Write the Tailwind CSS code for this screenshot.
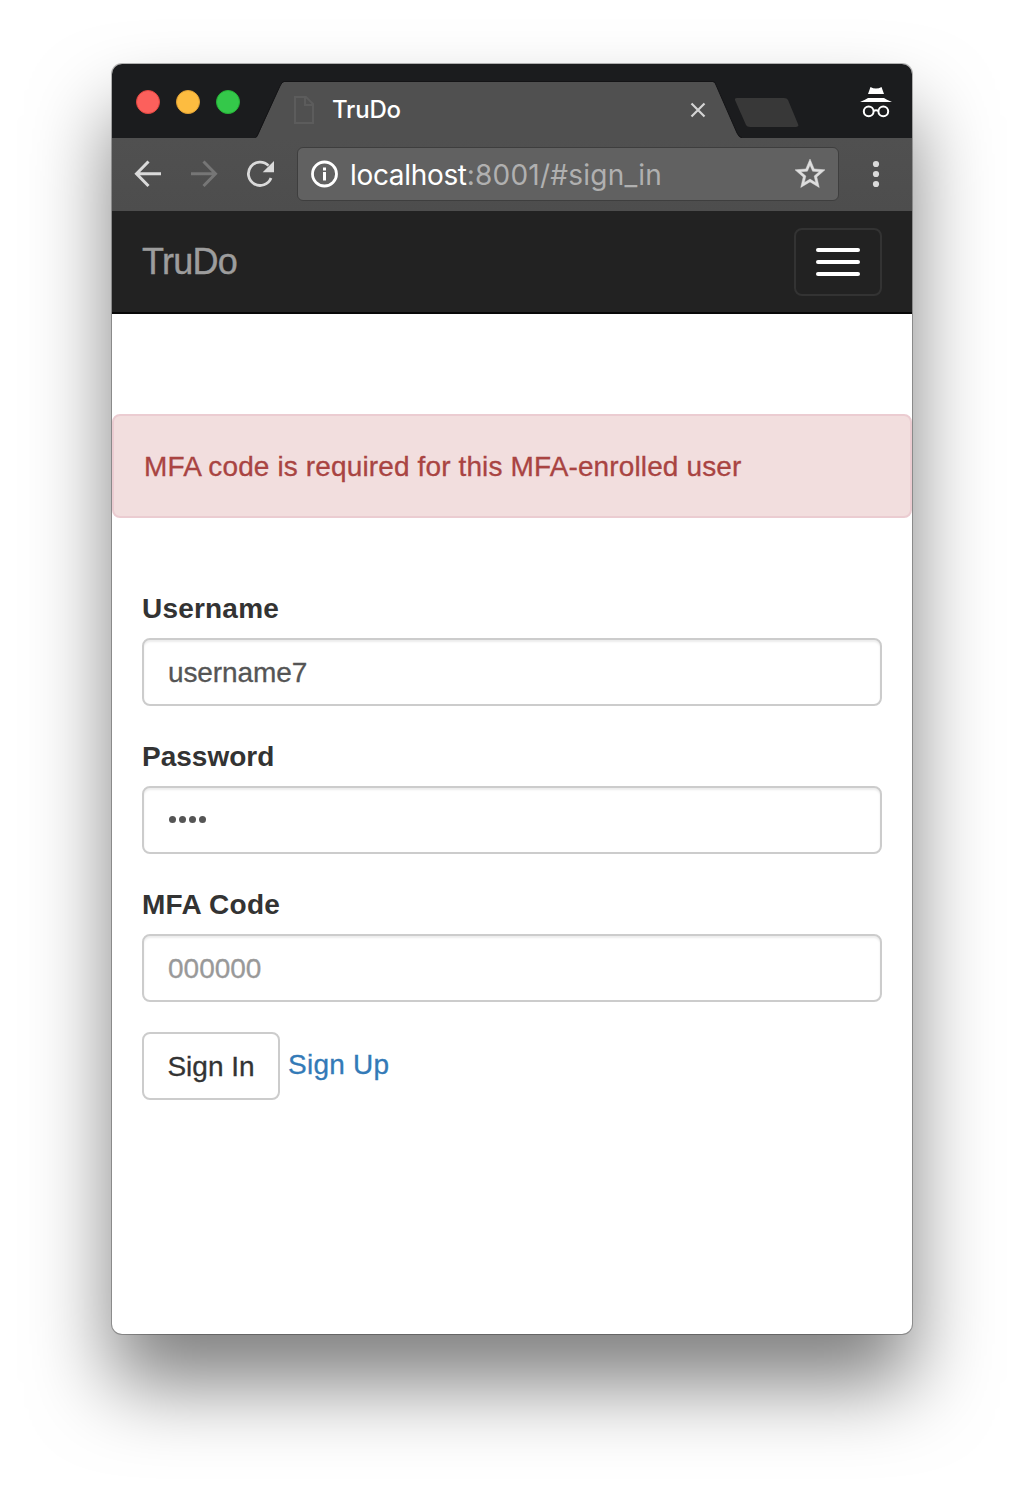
<!DOCTYPE html>
<html lang="en">
<head>
<meta charset="utf-8">
<title>TruDo</title>
<script src="https://cdn.jsdelivr.net/npm/@tailwindcss/browser@4"></script>
</head>
<body class="h-[1494px] overflow-hidden bg-white px-28 pt-16">
<div class="h-[1270px] w-[800px] overflow-hidden rounded-[10px] bg-white font-['Liberation_Sans',sans-serif] text-[28px] leading-10 text-[#333] shadow-[0_0_0_1px_rgba(0,0,0,0.28),0_50px_80px_rgba(0,0,0,0.5)]">

  <!-- Tab strip -->
  <div class="flex h-[74px] bg-[#1b1c1e]">
    <div class="flex w-36 gap-4 pt-[26px] pl-6">
      <span class="size-6 rounded-full border border-[#e2463f] bg-[#fc605c]"></span>
      <span class="size-6 rounded-full border border-[#e0a033] bg-[#fdbc40]"></span>
      <span class="size-6 rounded-full border border-[#24b235] bg-[#34c84a]"></span>
    </div>
    <div class="relative h-full w-[486px]">
      <svg class="absolute inset-0" width="486" height="74" viewBox="256 64 486 74"><path d="M255 138Q257 138 258 135L280 86Q282 82 284 82H713Q715 82 716 85L737 133Q739 138 742 138Z" fill="#505050"/><path d="M255 137.500Q257 137 258 134L280 86Q282 81.500 284 81.500H713Q715 81.500 716 85L737 133Q739 137.500 742 137.500" fill="none" stroke="#141416"/></svg>
      <div class="relative flex h-full items-center pt-[18px] pr-9 pl-[37px]">
        <svg width="22" height="30" viewBox="293 95 22 30" fill="none" stroke="#5c5c5c" stroke-width="2"><path d="M295 97H306L313 104V123H295ZM305 97V105H313"/></svg>
        <span class="ml-[17px] flex-1 font-['Inter',sans-serif] text-2xl font-medium tracking-[-0.2px] text-white">TruDo</span>
        <svg width="16" height="16" viewBox="690 102 16 16" stroke="#d4d4d4" stroke-width="2.200"><path d="M691.500 103.500L704.500 116.500M704.500 103.500L691.500 116.500"/></svg>
      </div>
    </div>
    <svg class="-ml-2 mt-[33px]" width="66" height="32" viewBox="734 97 66 32"><path d="M737 98H784Q787 98 788 100L798 124Q799 127 796 127H750Q747 127 746 125L735 100Q734.500 98 737 98Z" fill="#383838"/></svg>
    <svg class="mt-[22px] mr-5 ml-auto" width="32" height="34" viewBox="860 86 32 34" fill="#fff"><path d="M870.500 87Q873 88.500 876 88.500Q879 88.500 881.500 87L884 94H868ZM860 102Q866 99.500 868 98H884Q886 99.500 892 102Z"/><g fill="none" stroke="#fff" stroke-width="2"><circle cx="868.700" cy="111.300" r="4.900"/><circle cx="883.300" cy="111.300" r="4.900"/><path d="M873.500 111Q876 109.500 878.500 111"/></g></svg>
  </div>

  <!-- Toolbar -->
  <div class="flex h-[73px] items-center bg-linear-to-b from-[#505050] to-[#4d4d4d] pb-0.5 pl-5">
    <svg width="32" height="32" viewBox="132 158 32 32" fill="none" stroke="#dadada" stroke-width="3"><path d="M161 173.800H137M148.500 161.500L136.500 173.800L148.500 186"/></svg>
    <svg class="ml-6" width="32" height="32" viewBox="188 158 32 32" fill="none" stroke="#767676" stroke-width="3"><path d="M191 173.800H215M203.500 161.500L215.500 173.800L203.500 186"/></svg>
    <svg class="ml-6" width="32" height="32" viewBox="244 158 32 32"><path d="M271 178A11.700 11.700 0 1 1 268.500 165.600" fill="none" stroke="#dadada" stroke-width="2.800"/><path d="M274 161V172.300H262.700Z" fill="#dadada"/></svg>
    <div class="ml-[21px] flex h-[54px] w-[542px] items-center rounded-md border border-[#3e3e3e] bg-[#616161] pr-2.5 pl-3">
      <svg width="28" height="28" viewBox="310 160.500 28 28"><circle cx="324.500" cy="174.500" r="12" fill="none" stroke="#fff" stroke-width="2.800"/><path d="M323 168H326V171H323ZM323 172.600H326V181H323Z" fill="#fff"/></svg>
      <span class="ml-3 flex-1 pt-0.5 font-['Inter',sans-serif] text-[28px] tracking-[0.23px] text-[#b0b0b0]"><span class="tracking-[-0.33px] text-white">localhost</span>:8001/#sign_in</span>
      <svg width="36" height="36" viewBox="0 0 24 24" fill="#dedede" stroke="#dedede" stroke-width="0.300"><path d="M22 9.240l-7.190-.62L12 2 9.190 8.630 2 9.240l5.460 4.730L5.820 21 12 17.270 18.180 21l-1.630-7.030L22 9.240zM12 15.400l-3.760 2.270 1-4.280-3.320-2.880 4.380-.38L12 6.100l1.710 4.040 4.380.38-3.320 2.880 1 4.280L12 15.400z"/></svg>
    </div>
    <svg class="ml-[33px]" width="8" height="28" viewBox="872 160 8 28" fill="#dadada"><circle cx="876" cy="164" r="3.100"/><circle cx="876" cy="174" r="3.100"/><circle cx="876" cy="184" r="3.100"/></svg>
  </div>

  <!-- Page -->
  <nav class="flex h-[103px] items-center justify-between border-b-2 border-[#080808] bg-[#222] px-[30px]">
    <a class="text-4xl tracking-[-0.7px] text-[#9d9d9d] [-webkit-text-stroke:0.4px]">TruDo</a>
    <button class="flex h-[68px] w-[88px] flex-col items-center justify-center gap-2 rounded-lg border-2 border-[#333]">
      <span class="h-1 w-11 rounded-[2px] bg-white"></span>
      <span class="h-1 w-11 rounded-[2px] bg-white"></span>
      <span class="h-1 w-11 rounded-[2px] bg-white"></span>
    </button>
  </nav>
  <div class="mt-[100px] flex h-[104px] items-center rounded-lg border-2 border-[#ebccd1] bg-[#f2dede] px-[30px] pt-0.5 tracking-[0.13px] text-[#a94442] [-webkit-text-stroke:0.3px]">MFA code is required for this MFA-enrolled user</div>
  <form class="mt-[70px] px-[30px]">
    <label class="block pt-px font-bold tracking-[0.2px]">Username</label>
    <input class="mt-[9px] mb-[30px] block h-[68px] w-full rounded-lg border-2 border-[#ccc] px-6 pt-0.5 text-[#555] tracking-[-0.1px] shadow-[inset_0_2px_2px_rgba(0,0,0,0.075)] [-webkit-text-stroke:0.3px]" value="username7">
    <label class="block pt-px font-bold">Password</label>
    <div class="mt-[9px] mb-[30px] flex h-[68px] w-full items-center gap-[3px] rounded-lg border-2 border-[#ccc] px-[25px] pb-px shadow-[inset_0_2px_2px_rgba(0,0,0,0.075)]">
      <span class="size-[7px] rounded-full bg-[#555]"></span><span class="size-[7px] rounded-full bg-[#555]"></span><span class="size-[7px] rounded-full bg-[#555]"></span><span class="size-[7px] rounded-full bg-[#555]"></span>
    </div>
    <label class="block pt-px font-bold tracking-[0.3px]">MFA Code</label>
    <input class="mt-[9px] mb-[30px] block h-[68px] w-full rounded-lg border-2 border-[#ccc] px-6 pt-0.5 text-[#555] shadow-[inset_0_2px_2px_rgba(0,0,0,0.075)] [-webkit-text-stroke:0.3px] placeholder:text-[#999]" placeholder="000000">
    <div class="flex items-center">
      <button type="button" class="h-[68px] w-[138px] rounded-lg border-2 border-[#ccc] bg-white pt-0.5 [-webkit-text-stroke:0.3px]">Sign In</button>
      <a class="-mt-0.5 ml-2 tracking-[0.25px] text-[#337ab7] [-webkit-text-stroke:0.3px]">Sign Up</a>
    </div>
  </form>
</div>
</body>
</html>
